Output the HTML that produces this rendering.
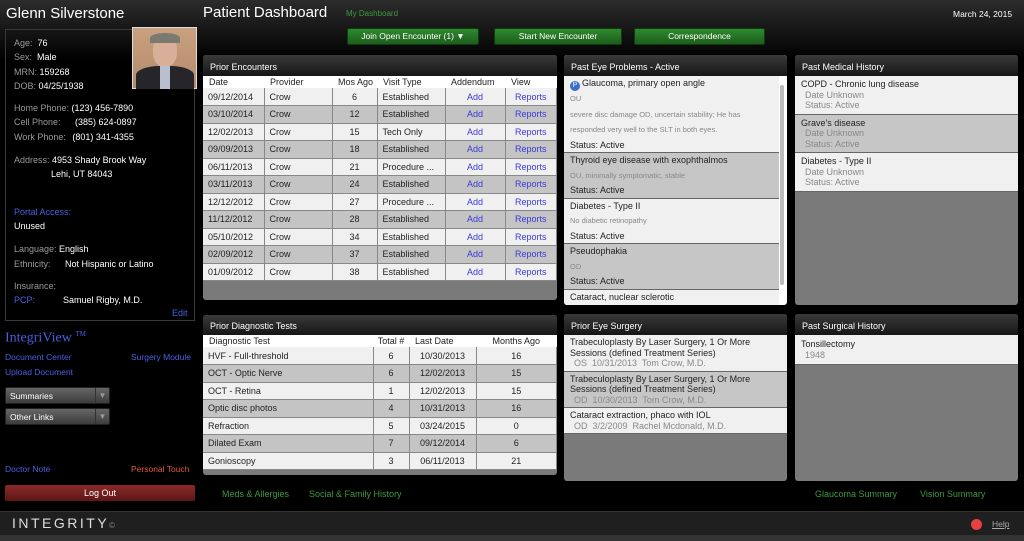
<!DOCTYPE html>
<html><head><style>
*{margin:0;padding:0;box-sizing:border-box}
body{width:1024px;height:541px;overflow:hidden;background:#000;font-family:"Liberation Sans",sans-serif;position:relative;color:#fff}
.bgtop{position:absolute;left:0;top:0;width:1024px;height:60px;background:linear-gradient(#2c2c2c,#000)}
.a{position:absolute;white-space:nowrap}
.lbl{color:#9a9a9a;font-size:9px}
.val{color:#fff;font-size:9px}
.blue{color:#4a5fe0}
.panel{position:absolute;background:#7a7a7a;border-radius:3px;overflow:hidden}
.ph{height:21px;background:linear-gradient(#3a3a3a,#161616);color:#fff;font-size:9px;padding:7px 0 0 7px}
table{border-collapse:collapse;width:100%;font-size:9px;color:#222}
th{background:#fff;font-weight:normal;text-align:left;height:12px;padding-left:6px}
td{height:17.5px;padding-left:5px;border-right:1px solid #888;border-bottom:1px solid #888}
tr.o td{background:#f0f0f0}tr.e td{background:#c4c4c4}
.c{text-align:center;padding-left:0}
.lk{color:#3a3ad8;text-align:center;padding-left:0}
.item{font-size:9px;color:#222;padding:2px 6px;border-bottom:1px solid #666}
.item.o{background:#f0f0f0}.item.e{background:#c6c6c6}
.g{color:#888}
.btn{position:absolute;height:17px;background:linear-gradient(#2f8a2f,#1c5e1c);border:1px solid #0d3d0d;border-radius:2px;color:#fff;font-size:8.5px;text-align:center;line-height:15px}
.gr{color:#3d9a3d;font-size:9px}
.dd{position:absolute;left:5px;width:105px;height:17px;background:linear-gradient(#666,#3c3c3c);border-radius:2px;font-size:8.5px;color:#fff;padding:3px 4px;border:1px solid #222}
.dd span{position:absolute;right:0;top:0;width:14px;height:15px;border-left:1px solid #333;color:#999;font-size:8px;text-align:center;line-height:15px}
.ep{line-height:14.5px;padding:0 6px}
</style></head><body>
<div class="bgtop"></div>
<div class="a" style="left:6px;top:5px;font-size:15px">Glenn Silverstone</div>
<div class="a" style="left:203px;top:4px;font-size:15px">Patient Dashboard</div>
<div class="a gr" style="left:346px;top:9px;font-size:8px">My Dashboard</div>
<div class="a" style="left:953px;top:9px;font-size:8.5px">March 24, 2015</div>
<div class="btn" style="left:347px;top:28px;width:132px">Join Open Encounter (1) ▼</div>
<div class="btn" style="left:494px;top:28px;width:128px">Start New Encounter</div>
<div class="btn" style="left:634px;top:28px;width:131px">Correspondence</div>

<div class="a" style="left:5px;top:29px;width:190px;height:292px;border:1px solid #3a3a3a"></div>
<div class="a" style="left:132px;top:27px;width:65px;height:62px;border:1px solid #ddd;background:linear-gradient(#c9a080,#b38a6a)">
<div style="position:absolute;left:20px;top:7px;width:24px;height:32px;border-radius:45%;background:#d8b09a"></div>
<div style="position:absolute;left:17px;top:5px;width:30px;height:10px;border-radius:50% 50% 0 0;background:#7a7a70"></div>
<div style="position:absolute;left:3px;top:38px;width:58px;height:23px;border-radius:40% 40% 0 0;background:#25252a"></div>
<div style="position:absolute;left:27px;top:38px;width:10px;height:23px;background:#b8c0d0"></div></div>
<div class="a lbl" style="left:14px;top:38px">Age: <span class="val">&nbsp;76</span></div>
<div class="a lbl" style="left:14px;top:52px">Sex: <span class="val">&nbsp;Male</span></div>
<div class="a lbl" style="left:14px;top:67px">MRN: <span class="val">159268</span></div>
<div class="a lbl" style="left:14px;top:81px">DOB: <span class="val">04/25/1938</span></div>
<div class="a lbl" style="left:14px;top:103px">Home Phone: <span class="val">(123) 456-7890</span></div>
<div class="a lbl" style="left:14px;top:117px">Cell Phone: <span class="val" style="margin-left:12px">(385) 624-0897</span></div>
<div class="a lbl" style="left:14px;top:132px">Work Phone: <span class="val" style="margin-left:4px">(801) 341-4355</span></div>
<div class="a lbl" style="left:14px;top:155px">Address: <span class="val">4953 Shady Brook Way</span></div>
<div class="a val" style="left:51px;top:169px">Lehi, UT 84043</div>
<div class="a blue" style="left:14px;top:207px;font-size:9px">Portal Access:</div>
<div class="a val" style="left:14px;top:221px">Unused</div>
<div class="a lbl" style="left:14px;top:244px">Language: <span class="val">English</span></div>
<div class="a lbl" style="left:14px;top:259px">Ethnicity: <span class="val" style="margin-left:12px">Not Hispanic or Latino</span></div>
<div class="a lbl" style="left:14px;top:281px">Insurance:</div>
<div class="a blue" style="left:14px;top:295px;font-size:9px">PCP:<span class="val" style="margin-left:28px">Samuel Rigby, M.D.</span></div>
<div class="a blue" style="left:172px;top:308px;font-size:9px">Edit</div>

<div class="a blue" style="left:5px;top:330px;font-family:'Liberation Serif',serif;font-size:14px">IntegriView <sup style="font-size:7px">TM</sup></div>
<div class="a blue" style="left:5px;top:352px;font-size:8.5px">Document Center</div>
<div class="a blue" style="left:131px;top:352px;font-size:8.5px">Surgery Module</div>
<div class="a blue" style="left:5px;top:367px;font-size:8.5px">Upload Document</div>
<div class="dd" style="top:387px">Summaries<span>▼</span></div>
<div class="dd" style="top:408px">Other Links<span>▼</span></div>
<div class="a blue" style="left:5px;top:464px;font-size:8.5px">Doctor Note</div>
<div class="a" style="left:131px;top:464px;font-size:8.5px;color:#e05a3a">Personal Touch</div>
<div class="a" style="left:5px;top:485px;width:190px;height:16px;background:linear-gradient(#8a2a2a,#5e1616);border-radius:2px;font-size:9px;text-align:center;line-height:16px">Log Out</div>

<div class="panel" style="left:203px;top:55px;width:354px;height:245px"><div class="ph">Prior Encounters</div>
<table><tr><th style="width:61px">Date</th><th style="width:68px">Provider</th><th style="width:45px">Mos Ago</th><th style="width:68px">Visit Type</th><th style="width:60px">Addendum</th><th>View</th></tr>
<tr class="o"><td>09/12/2014</td><td>Crow</td><td class="c">6</td><td>Established</td><td class="lk">Add</td><td class="lk">Reports</td></tr>
<tr class="e"><td>03/10/2014</td><td>Crow</td><td class="c">12</td><td>Established</td><td class="lk">Add</td><td class="lk">Reports</td></tr>
<tr class="o"><td>12/02/2013</td><td>Crow</td><td class="c">15</td><td>Tech Only</td><td class="lk">Add</td><td class="lk">Reports</td></tr>
<tr class="e"><td>09/09/2013</td><td>Crow</td><td class="c">18</td><td>Established</td><td class="lk">Add</td><td class="lk">Reports</td></tr>
<tr class="o"><td>06/11/2013</td><td>Crow</td><td class="c">21</td><td>Procedure ...</td><td class="lk">Add</td><td class="lk">Reports</td></tr>
<tr class="e"><td>03/11/2013</td><td>Crow</td><td class="c">24</td><td>Established</td><td class="lk">Add</td><td class="lk">Reports</td></tr>
<tr class="o"><td>12/12/2012</td><td>Crow</td><td class="c">27</td><td>Procedure ...</td><td class="lk">Add</td><td class="lk">Reports</td></tr>
<tr class="e"><td>11/12/2012</td><td>Crow</td><td class="c">28</td><td>Established</td><td class="lk">Add</td><td class="lk">Reports</td></tr>
<tr class="o"><td>05/10/2012</td><td>Crow</td><td class="c">34</td><td>Established</td><td class="lk">Add</td><td class="lk">Reports</td></tr>
<tr class="e"><td>02/09/2012</td><td>Crow</td><td class="c">37</td><td>Established</td><td class="lk">Add</td><td class="lk">Reports</td></tr>
<tr class="o"><td>01/09/2012</td><td>Crow</td><td class="c">38</td><td>Established</td><td class="lk">Add</td><td class="lk">Reports</td></tr>
</table></div>

<div class="panel" style="left:564px;top:55px;width:223px;height:250px;background:#fff"><div class="ph">Past Eye Problems - Active</div>
<div style="position:relative;width:215px">
<div class="item o ep"><span style="display:inline-block;width:10px;height:10px;border-radius:50%;background:#3a6fd0;color:#fff;font-size:7px;text-align:center;line-height:10px;margin:0 2px 0 0;vertical-align:-1px">P</span>Glaucoma, primary open angle<br><span class="g" style="font-size:7.5px">OU</span><br><span class="g" style="font-size:7.5px">severe disc damage OD, uncertain stability; He has</span><br><span class="g" style="font-size:7.5px">responded very well to the SLT in both eyes.</span><br>Status: Active</div>
<div class="item e ep">Thyroid eye disease with exophthalmos<br><span class="g" style="font-size:7.5px">OU, minimally symptomatic, stable</span><br>Status: Active</div>
<div class="item o ep">Diabetes - Type II<br><span class="g" style="font-size:7.5px">No diabetic retinopathy</span><br>Status: Active</div>
<div class="item e ep">Pseudophakia<br><span class="g" style="font-size:7.5px">OD</span><br>Status: Active</div>
<div class="item o ep" style="border:0">Cataract, nuclear sclerotic<br><span class="g" style="font-size:7.5px">OD</span></div>
</div>
<div style="position:absolute;left:216px;top:30px;width:4px;height:200px;background:#bbb;border-radius:2px"></div>
</div>

<div class="panel" style="left:795px;top:55px;width:223px;height:250px"><div class="ph">Past Medical History</div>
<div class="item o" style="line-height:10.5px;padding:3px 6px">COPD - Chronic lung disease<br><span class="g" style="margin-left:4px">Date Unknown</span><br><span class="g" style="margin-left:4px">Status: Active</span></div>
<div class="item e" style="line-height:10.5px;padding:3px 6px">Grave's disease<br><span class="g" style="margin-left:4px">Date Unknown</span><br><span class="g" style="margin-left:4px">Status: Active</span></div>
<div class="item o" style="line-height:10.5px;padding:3px 6px">Diabetes - Type II<br><span class="g" style="margin-left:4px">Date Unknown</span><br><span class="g" style="margin-left:4px">Status: Active</span></div>
</div>

<div class="panel" style="left:203px;top:315px;width:354px;height:160px"><div class="ph" style="height:20px;padding-top:6px">Prior Diagnostic Tests</div>
<table><tr><th style="width:170px">Diagnostic Test</th><th style="width:36px" class="c">Total #</th><th style="width:67px">Last Date</th><th class="c">Months Ago</th></tr>
<tr class="o"><td>HVF - Full-threshold</td><td class="c">6</td><td class="c">10/30/2013</td><td class="c">16</td></tr>
<tr class="e"><td>OCT - Optic Nerve</td><td class="c">6</td><td class="c">12/02/2013</td><td class="c">15</td></tr>
<tr class="o"><td>OCT - Retina</td><td class="c">1</td><td class="c">12/02/2013</td><td class="c">15</td></tr>
<tr class="e"><td>Optic disc photos</td><td class="c">4</td><td class="c">10/31/2013</td><td class="c">16</td></tr>
<tr class="o"><td>Refraction</td><td class="c">5</td><td class="c">03/24/2015</td><td class="c">0</td></tr>
<tr class="e"><td>Dilated Exam</td><td class="c">7</td><td class="c">09/12/2014</td><td class="c">6</td></tr>
<tr class="o"><td>Gonioscopy</td><td class="c">3</td><td class="c">06/11/2013</td><td class="c">21</td></tr>
</table></div>

<div class="panel" style="left:564px;top:314px;width:223px;height:167px"><div class="ph">Prior Eye Surgery</div>
<div class="item o" style="line-height:10.5px;padding:2px 6px">Trabeculoplasty By Laser Surgery, 1 Or More<br>Sessions (defined Treatment Series)<br><span class="g" style="margin-left:4px">OS&nbsp; 10/31/2013&nbsp; Tom Crow, M.D.</span></div>
<div class="item e" style="line-height:10.5px;padding:2px 6px">Trabeculoplasty By Laser Surgery, 1 Or More<br>Sessions (defined Treatment Series)<br><span class="g" style="margin-left:4px">OD&nbsp; 10/30/2013&nbsp; Tom Crow, M.D.</span></div>
<div class="item o" style="line-height:10.5px;padding:2px 6px">Cataract extraction, phaco with IOL<br><span class="g" style="margin-left:4px">OD&nbsp; 3/2/2009&nbsp; Rachel Mcdonald, M.D.</span></div>
</div>
<div class="panel" style="left:795px;top:314px;width:223px;height:167px"><div class="ph">Past Surgical History</div>
<div class="item o" style="line-height:10.5px;padding:4px 6px">Tonsillectomy<br><span class="g" style="margin-left:4px">1948</span></div>
</div>

<div class="a gr" style="left:222px;top:489px">Meds &amp; Allergies</div>
<div class="a gr" style="left:309px;top:489px">Social &amp; Family History</div>
<div class="a gr" style="left:815px;top:489px">Glaucoma Summary</div>
<div class="a gr" style="left:920px;top:489px">Vision Summary</div>

<div class="a" style="left:0;top:511px;width:1024px;height:25px;background:#1f1f1f;border-top:1px solid #333"></div>
<div class="a" style="left:0;top:535px;width:1024px;height:6px;background:#333"></div>
<div class="a" style="left:12px;top:515px;font-size:14px;letter-spacing:2.5px;color:#ddd">INTEGRITY<span style="font-size:8px;color:#888">©</span></div>
<div class="a" style="left:971px;top:519px;width:11px;height:11px;border-radius:50%;background:#e84040"></div>
<div class="a" style="left:992px;top:519px;font-size:8.5px;color:#aaa;text-decoration:underline">Help</div>
</body></html>
